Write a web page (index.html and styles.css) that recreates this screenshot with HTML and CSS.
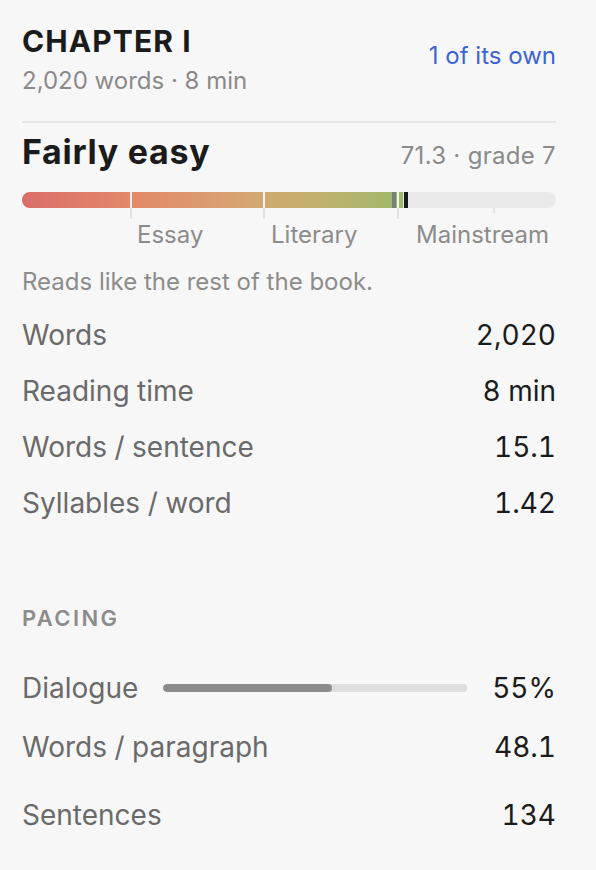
FILE: index.html
```html
<!DOCTYPE html>
<html>
<head>
<meta charset="utf-8">
<link rel="stylesheet" href="styles.css">
</head>
<body>
<div class="panel">
  <header class="head">
    <div class="head-main">
      <div class="title">CHAPTER I</div>
      <div class="meta">2,020 words · 8 min</div>
    </div>
    <a class="own">1 of its own</a>
  </header>
  <div class="divider"></div>
  <div class="grade-row">
    <div class="grade">Fairly easy</div>
    <div class="score">71.3 · grade 7</div>
  </div>
  <div class="scale">
    <div class="track">
      <div class="fill" style="width: 71.4%"></div>
      <div class="avg" style="left: 69.3%"></div>
      <div class="mark" style="left: 71.5%"></div>
    </div>
    <div class="tick" style="left: 20.2%"></div>
    <div class="tick" style="left: 45.1%"></div>
    <div class="tick" style="left: 70.2%"></div>
    <div class="tick tick-light" style="left: 88.2%"></div>
    <span class="lbl" style="left: 115px">Essay</span>
    <span class="lbl" style="left: 249px">Literary</span>
    <span class="lbl" style="left: 394px">Mainstream</span>
  </div>
  <p class="note">Reads like the rest of the book.</p>
  <div class="rows">
    <div class="row"><span class="k">Words</span><span class="v">2,020</span></div>
    <div class="row"><span class="k">Reading time</span><span class="v">8 min</span></div>
    <div class="row"><span class="k">Words / sentence</span><span class="v">15.1</span></div>
    <div class="row"><span class="k">Syllables / word</span><span class="v">1.42</span></div>
  </div>
  <div class="section">PACING</div>
  <div class="row row-bar">
    <span class="k">Dialogue</span>
    <div class="mini"><div class="mini-fill" style="width: 55.5%"></div></div>
    <span class="v">55%</span>
  </div>
  <div class="row row-p2"><span class="k">Words / paragraph</span><span class="v">48.1</span></div>
  <div class="row row-p3"><span class="k">Sentences</span><span class="v">134</span></div>
</div>
</body>
</html>
```
FILE: styles.css
```css
html, body {
  margin: 0;
  padding: 0;
  background: #f7f7f7;
}
body {
  font-family: Inter, "Noto Sans", sans-serif;
  color: #1b1b1b;
}
.panel {
  padding: 23px 40px 0 22px;
}
.head {
  display: flex;
  justify-content: space-between;
  align-items: flex-start;
}
.title {
  font-size: 30px;
  font-weight: 650;
  line-height: 36px;
  letter-spacing: 1.1px;
}
.meta {
  font-size: 24px;
  line-height: 30px;
  color: #8a8a8a;
  margin-top: 7px;
}
.own {
  font-size: 24px;
  line-height: 30px;
  color: #3b63d4;
  margin-top: 18px;
}
.divider {
  height: 2px;
  background: #e4e4e4;
  margin-top: 25px;
}
.grade-row {
  display: flex;
  justify-content: space-between;
  align-items: baseline;
  margin-top: 7px;
}
.grade {
  font-size: 34px;
  font-weight: 700;
  line-height: 44px;
  letter-spacing: 0.7px;
}
.score {
  font-size: 24px;
  line-height: 30px;
  color: #8a8a8a;
  letter-spacing: 0.3px;
}
.scale {
  position: relative;
  margin-top: 18px;
  height: 58px;
}
.track {
  position: relative;
  height: 16px;
  border-radius: 8px;
  background: #eaeaea;
  overflow: hidden;
}
.fill {
  position: absolute;
  top: 0;
  bottom: 0;
  left: 0;
  background: linear-gradient(90deg, #da6e69 0%, #e3886a 28%, #d6a671 60%, #c4b06e 75%, #9db96b 100%);
}
.avg {
  position: absolute;
  top: 0;
  bottom: 0;
  width: 4px;
  background: #7b7f78;
}
.mark {
  position: absolute;
  top: 0;
  bottom: 0;
  width: 4px;
  background: #1a1a1a;
}
.tick {
  position: absolute;
  top: 0;
  height: 27px;
  width: 2px;
  background: linear-gradient(#f4f4f4 0, #f4f4f4 16px, #e2e2e2 16px);
}
.tick-light {
  height: 21px;
  background: linear-gradient(#eaeaea 0, #eaeaea 16px, #e4e4e4 16px);
}
.lbl {
  position: absolute;
  top: 28px;
  font-size: 24px;
  line-height: 30px;
  color: #8c8c8c;
}
.note {
  margin: 17px 0 0;
  font-size: 24px;
  line-height: 30px;
  color: #8c8c8c;
}
.rows {
  margin-top: 10px;
}
.row {
  display: flex;
  align-items: center;
  justify-content: space-between;
  height: 56px;
  font-size: 28px;
  font-variant-numeric: tabular-nums;
}
.k {
  color: #6a6a6a;
}
.v {
  color: #1b1b1b;
}
.section {
  margin-top: 73px;
  font-size: 22px;
  font-weight: 600;
  letter-spacing: 2.4px;
  color: #8c8c8c;
  line-height: 28px;
}
.row-bar {
  margin-top: 28px;
  gap: 25px;
}
.row-bar .k {
  flex: none;
}
.mini {
  flex: 1;
  height: 8px;
  border-radius: 4px;
  background: #dedede;
  overflow: hidden;
}
.mini-fill {
  height: 100%;
  background: #8c8c8c;
  border-radius: 4px;
}
.row-bar .v {
  flex: none;
}
.row-p2 {
  margin-top: 3px;
}
.row-p3 {
  margin-top: 12px;
}
```
